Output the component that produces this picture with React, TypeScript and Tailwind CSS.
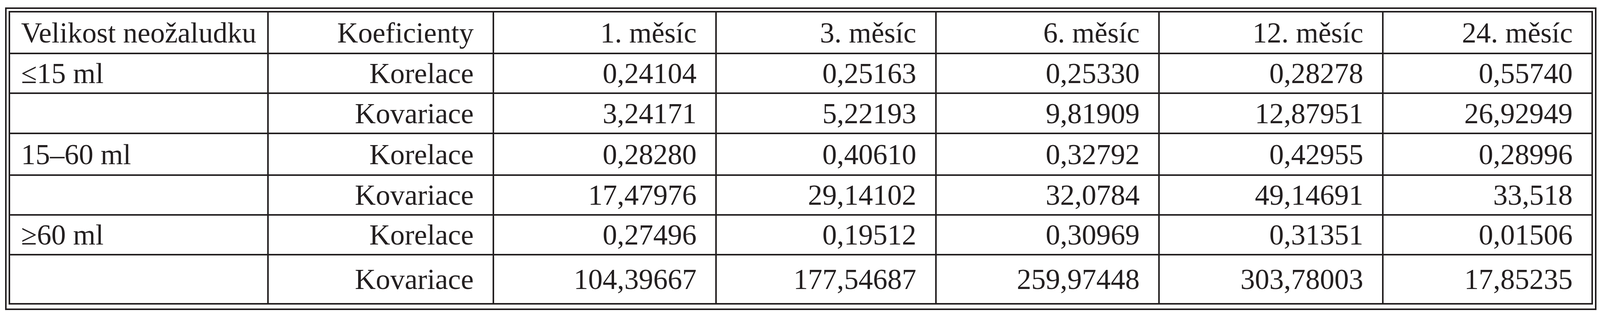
import React from 'react';

const months = ['1. měsíc', '3. měsíc', '6. měsíc', '12. měsíc', '24. měsíc'];

const rows: { size: string; coef: string; values: string[] }[] = [
  { size: '≤15 ml', coef: 'Korelace', values: ['0,24104', '0,25163', '0,25330', '0,28278', '0,55740'] },
  { size: '', coef: 'Kovariace', values: ['3,24171', '5,22193', '9,81909', '12,87951', '26,92949'] },
  { size: '15–60 ml', coef: 'Korelace', values: ['0,28280', '0,40610', '0,32792', '0,42955', '0,28996'] },
  { size: '', coef: 'Kovariace', values: ['17,47976', '29,14102', '32,0784', '49,14691', '33,518'] },
  { size: '≥60 ml', coef: 'Korelace', values: ['0,27496', '0,19512', '0,30969', '0,31351', '0,01506'] },
  { size: '', coef: 'Kovariace', values: ['104,39667', '177,54687', '259,97448', '303,78003', '17,85235'] },
];

// row heights incl. bottom rule, last row has none
const rowHeights = ['h-[102px]', 'h-[103px]', 'h-[107px]', 'h-[102px]', 'h-[102px]', 'h-[122px]'];

function Cell({ children, first, lastCol, lastRow, className }: {
  children?: React.ReactNode;
  first?: boolean;
  lastCol?: boolean;
  lastRow?: boolean;
  className?: string;
}) {
  return (
    <div
      className={
        'flex items-center whitespace-nowrap ' +
        (first ? 'justify-start pl-[28px] ' : 'justify-end pr-[48px] ') +
        (lastCol ? '' : 'border-r-4 border-r-[#231f20] ') +
        (lastRow ? '' : 'border-b-4 border-b-[#231f20] ') +
        (className ?? '')
      }
    >
      {children}
    </div>
  );
}

export default function App() {
  return (
    <div className="min-h-[800px] w-full bg-white pl-[13px] pr-[9px] pt-[19px] font-['Liberation_Serif','Times_New_Roman',serif] text-[74px] leading-none text-[#231f20]">
      <div className="border-4 border-[#231f20] px-[5px] pt-[5px] pb-[10px]">
        <div className="grid grid-cols-[minmax(0,717fr)_minmax(0,624fr)_minmax(0,618fr)_minmax(0,609fr)_minmax(0,619fr)_minmax(0,620fr)_minmax(0,576fr)] border-4 border-[#231f20]">
          {/* header */}
          <Cell first className="h-[107px]">Velikost neožaludku</Cell>
          <Cell className="h-[107px]">Koeficienty</Cell>
          {months.map((m, i) => (
            <Cell key={m} lastCol={i === months.length - 1} className="h-[107px]">{m}</Cell>
          ))}

          {rows.map((r, ri) => {
            const lastRow = ri === rows.length - 1;
            const h = rowHeights[ri];
            return (
              <React.Fragment key={ri}>
                <Cell first lastRow={lastRow} className={h}>{r.size}</Cell>
                <Cell lastRow={lastRow} className={h}>{r.coef}</Cell>
                {r.values.map((v, vi) => (
                  <Cell key={vi} lastRow={lastRow} lastCol={vi === r.values.length - 1} className={h}>
                    {v}
                  </Cell>
                ))}
              </React.Fragment>
            );
          })}
        </div>
      </div>
    </div>
  );
}
